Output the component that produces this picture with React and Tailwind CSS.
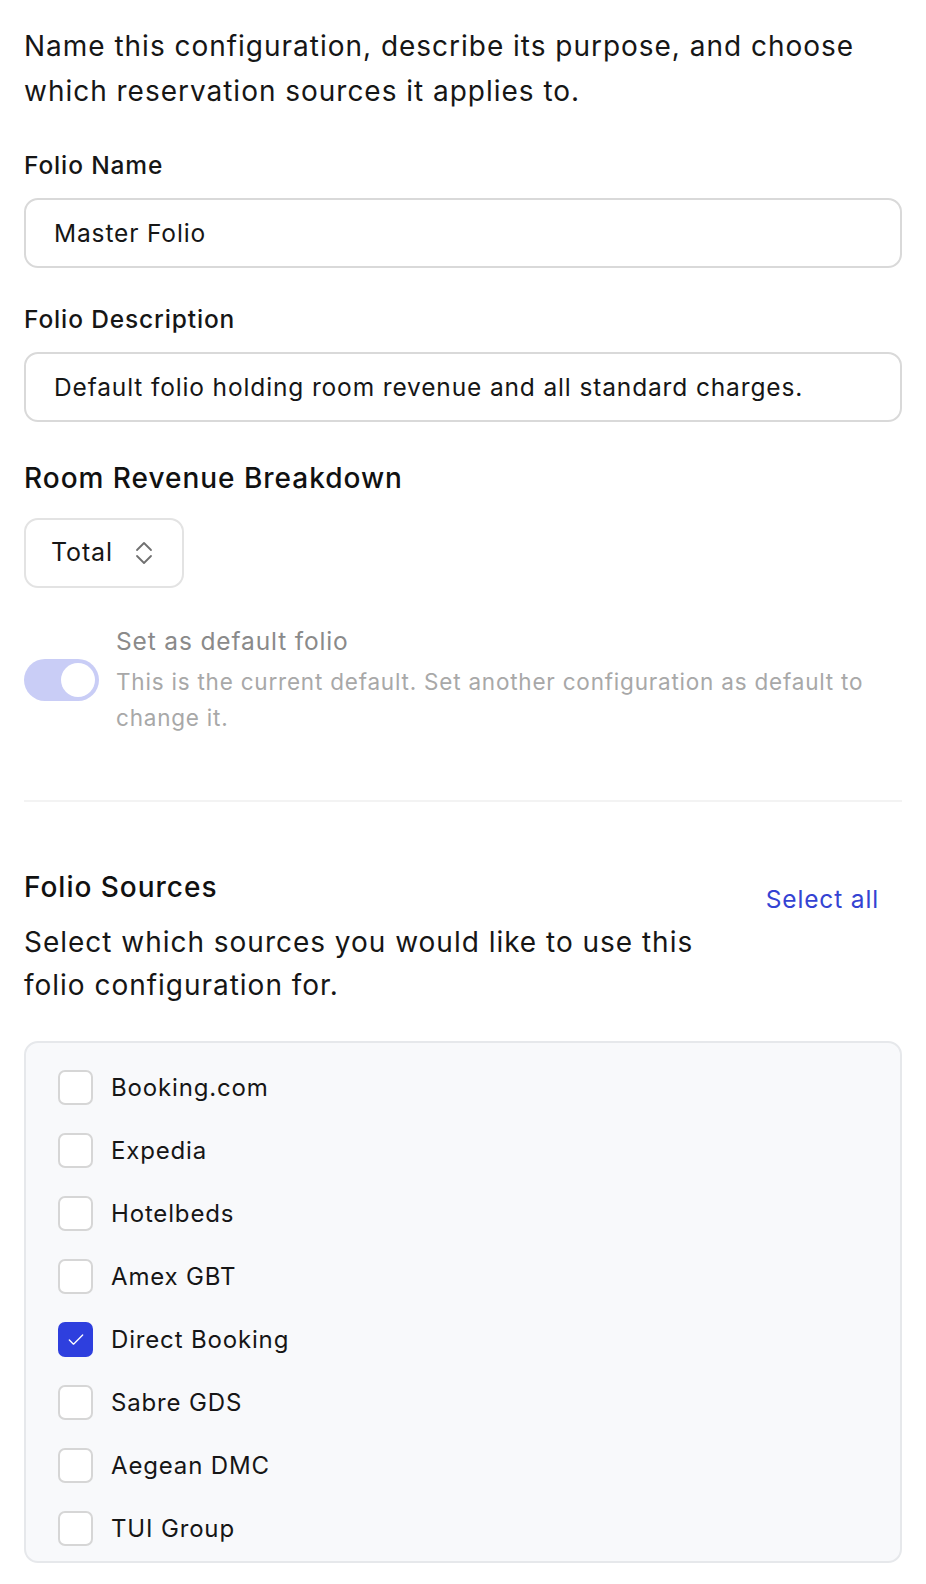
import React from "react";
import { Check } from "lucide-react";

const sources = [
  { name: "Booking.com", checked: false },
  { name: "Expedia", checked: false },
  { name: "Hotelbeds", checked: false },
  { name: "Amex GBT", checked: false },
  { name: "Direct Booking", checked: true },
  { name: "Sabre GDS", checked: false },
  { name: "Aegean DMC", checked: false },
  { name: "TUI Group", checked: false },
];

function Field({ label, value }) {
  return (
    <div className="flex flex-col gap-[15px]">
      <div className="text-[24.5px] leading-[36px] font-medium text-[#161616] tracking-[0.035em]">{label}</div>
      <div className="h-[70px] rounded-[14px] border-2 border-[#d9d9d9] bg-white flex items-center pl-[28px] text-[24.5px] text-[#161616] tracking-[0.035em]">
        {value}
      </div>
    </div>
  );
}

export default function App() {
  return (
    <div
      className="w-full bg-white pl-[24px] pr-[24px] pt-[24px] pb-[38px] text-[#161616]"
      style={{ fontFamily: "Inter, 'Noto Sans', sans-serif" }}
    >
      <p className="text-[28px] leading-[45px] text-[#161616] tracking-[0.035em] pr-[10px]">
        Name this configuration, describe its purpose, and choose which reservation sources it applies to.
      </p>

      <div className="mt-[33px] flex flex-col gap-[33px]">
        <Field label="Folio Name" value="Master Folio" />
        <Field label="Folio Description" value="Default folio holding room revenue and all standard charges." />
      </div>

      <h3 className="mt-[36px] text-[28px] leading-[40px] font-medium text-[#111] tracking-[0.035em]">Room Revenue Breakdown</h3>

      <div className="mt-[20px] w-[160px] h-[70px] rounded-[14px] border-2 border-[#e3e3e3] bg-white flex items-center pl-[25px] gap-[22px]">
        <span className="text-[25px] text-[#161616] tracking-[0.035em]">Total</span>
        <svg width="18" height="24" viewBox="0 0 18 24" fill="none" stroke="#707070" strokeWidth="1.8" strokeLinecap="round" strokeLinejoin="round">
          <polyline points="2,9 9,2 16,9" />
          <polyline points="2,15 9,22 16,15" />
        </svg>
      </div>

      <div className="mt-[35px] flex items-center gap-[17px]">
        <div className="w-[75px] h-[42px] rounded-full bg-[#c9cdf6] flex items-center justify-end pr-[4px] shrink-0">
          <div className="w-[34px] h-[34px] rounded-full bg-white" />
        </div>
        <div className="flex flex-col gap-[5px] pr-[10px]">
          <div className="text-[24.5px] leading-[36px] text-[#8a8a8a] tracking-[0.035em]">Set as default folio</div>
          <div className="text-[22.5px] leading-[36px] text-[#a8a8a8] tracking-[0.035em]">
            This is the current default. Set another configuration as default to change it.
          </div>
        </div>
      </div>

      <div className="mt-[64px] h-[2px] bg-[#f3f3f3]" />

      <div className="mt-[65px] flex items-start gap-[24px] pr-[23px]">
        <div className="flex-1">
          <h3 className="text-[28px] leading-[40px] font-medium text-[#111] tracking-[0.035em]">Folio Sources</h3>
          <p className="mt-[14px] text-[28px] leading-[43px] text-[#161616] tracking-[0.035em] max-w-[700px]">
            Select which sources you would like to use this folio configuration for.
          </p>
        </div>
        <button className="mt-[14px] text-[24.5px] leading-[36px] text-[#3443d3] tracking-[0.035em]">Select all</button>
      </div>

      <div className="mt-[34px] rounded-[14px] border-2 border-[#e6e8eb] bg-[#f8f9fb] pl-[32px] pt-[27px] pb-[15px] flex flex-col gap-[28px]">
        {sources.map((s) => (
          <label key={s.name} className="flex items-center gap-[18px]">
            {s.checked ? (
              <span className="w-[35px] h-[35px] rounded-[7px] bg-[#2e3fde] flex items-center justify-center">
                <Check size={20} strokeWidth={1.6} className="text-white" />
              </span>
            ) : (
              <span className="w-[35px] h-[35px] rounded-[7px] border-2 border-[#d6d6d6] bg-white" />
            )}
            <span className="text-[24px] leading-[34px] text-[#161616] tracking-[0.035em]">{s.name}</span>
          </label>
        ))}
      </div>
    </div>
  );
}
